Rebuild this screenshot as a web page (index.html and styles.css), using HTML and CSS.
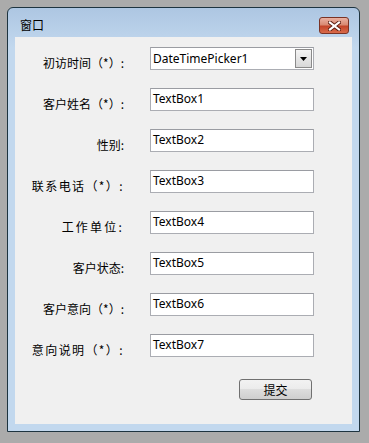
FILE: index.html
```html
<!DOCTYPE html>
<html>
<head>
<meta charset="utf-8">
<link rel="stylesheet" href="styles.css">
</head>
<body>
<div class="window">
  <div class="titlebar">
    <span class="title">窗口</span>
    <span class="close">
      <svg width="13" height="10" viewBox="0 0 13 10">
        <path d="M2 1.5 L11 8.5 M11 1.5 L2 8.5" stroke="#5a1c10" stroke-width="4" stroke-linecap="square"/>
        <path d="M2 1.5 L11 8.5 M11 1.5 L2 8.5" stroke="#ffffff" stroke-width="2.2" stroke-linecap="square"/>
      </svg>
    </span>
  </div>
  <div class="client">
    <div class="form">
      <label class="lbl">初访时间（*）:</label>
      <div class="field picker"><span>DateTimePicker1</span><span class="drop"><svg width="7" height="4" viewBox="0 0 7 4"><path d="M0 0 L7 0 L3.5 4 Z" fill="#000"/></svg></span></div>
      <label class="lbl">客户姓名（*）:</label>
      <div class="field">TextBox1</div>
      <label class="lbl">性别:</label>
      <div class="field">TextBox2</div>
      <label class="lbl wide">联系电话（*）:</label>
      <div class="field">TextBox3</div>
      <label class="lbl wider">工作单位:</label>
      <div class="field">TextBox4</div>
      <label class="lbl">客户状态:</label>
      <div class="field">TextBox5</div>
      <label class="lbl">客户意向（*）:</label>
      <div class="field">TextBox6</div>
      <label class="lbl wide">意向说明（*）:</label>
      <div class="field">TextBox7</div>
    </div>
    <div class="actions">
      <button class="btn">提交</button>
    </div>
  </div>
</div>
</body>
</html>
```

FILE: styles.css
```css
html, body {
  margin: 0;
  padding: 0;
}
body {
  background: #ababab;
  width: 369px;
  height: 443px;
  overflow: hidden;
  font-family: "Noto Sans CJK SC", "Noto Sans", sans-serif;
}
.window {
  margin: 7px 0 0 7px;
  width: 351px;
  height: 423px;
  border: 1px solid #1e3440;
  border-radius: 6px 6px 0 0;
  background: linear-gradient(to bottom, #adc6e2 0px, #c2d8ee 40px, #c2d8ee 100%);
  display: flex;
  flex-direction: column;
}
.titlebar {
  height: 29px;
  display: flex;
  justify-content: space-between;
  align-items: flex-start;
  padding: 0 10px 0 12px;
}
.title {
  font-size: 12px;
  line-height: 14px;
  margin-top: 10px;
  color: #000;
}
.close {
  margin-top: 9px;
  width: 28px;
  height: 15px;
  border: 1px solid #7a3325;
  border-radius: 3px;
  background: linear-gradient(to bottom, #eab1a2 0%, #d98a73 45%, #c4452a 55%, #d86a4a 100%);
  display: flex;
  align-items: center;
  justify-content: center;
}
.client {
  margin: 0 7px;
  width: 337px;
  height: 387px;
  background: #f0f0f0;
  box-sizing: border-box;
}
.form {
  display: grid;
  grid-template-columns: 109px 164px;
  column-gap: 26px;
  row-gap: 18px;
  padding-top: 10px;
}
.lbl {
  text-align: right;
  font-size: 12px;
  line-height: 14px;
  padding-top: 9px;
  color: #000;
  white-space: nowrap;
}
.lbl.wide {
  letter-spacing: 1.4px;
}
.lbl.wider {
  letter-spacing: 2.2px;
}
.field {
  height: 23px;
  box-sizing: border-box;
  border: 1px solid #abadb3;
  border-top-color: #9a9ca2;
  background: #fff;
  font-family: "Noto Sans", sans-serif;
  font-size: 12px;
  line-height: 20px;
  padding-left: 2px;
  color: #000;
}
.picker {
  display: flex;
  justify-content: space-between;
  align-items: center;
  padding-right: 1px;
}
.drop {
  width: 15px;
  height: 17px;
  border: 1px solid #8a8a8a;
  background: linear-gradient(to bottom, #f4f4f4, #d8d8d8);
  display: flex;
  align-items: center;
  justify-content: center;
}
.actions {
  display: flex;
  justify-content: flex-end;
  padding: 22px 40px 0 0;
}
.btn {
  width: 73px;
  height: 21px;
  border: 1px solid #707070;
  border-radius: 3px;
  background: linear-gradient(to bottom, #f2f2f2 0%, #ebebeb 50%, #dddddd 50%, #cfcfcf 100%);
  font-family: "Noto Sans CJK SC", sans-serif;
  font-size: 12px;
  line-height: 17px;
  padding: 0;
  color: #000;
}
```
